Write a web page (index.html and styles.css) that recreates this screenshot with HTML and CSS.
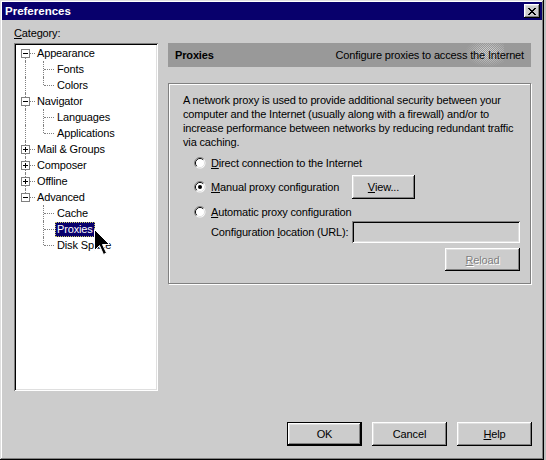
FILE: index.html
```html
<!DOCTYPE html>
<html>
<head>
<meta charset="utf-8">
<title>Preferences</title>
<link rel="stylesheet" href="styles.css">
</head>
<body>
<div class="window">
  <div class="titlebar">
    <span class="title">Preferences</span>
    <span class="close-btn"><svg width="8" height="7" viewBox="0 0 8 7"><path d="M0 0h2v1h1v1h2V1h1V0h2v1H7v1H6v1H5v1h1v1h1v1h1v1H6V6H5V5H3v1H2v1H0V6h1V5h1V4h1V3H2V2H1V1H0z" fill="#000"/></svg></span>
  </div>
  <div class="body">
    <div class="main">
      <div class="cat-label"><u>C</u>ategory:</div>
      <div class="tree">
        <div class="row"><span class="g g0 v-down h"><span class="exp minus"></span></span><span class="lbl">Appearance</span></div>
        <div class="row"><span class="g g0 v"></span><span class="g g1 v h"></span><span class="lbl">Fonts</span></div>
        <div class="row"><span class="g g0 v"></span><span class="g g1 v-up h"></span><span class="lbl">Colors</span></div>
        <div class="row"><span class="g g0 v h"><span class="exp minus"></span></span><span class="lbl">Navigator</span></div>
        <div class="row"><span class="g g0 v"></span><span class="g g1 v h"></span><span class="lbl">Languages</span></div>
        <div class="row"><span class="g g0 v"></span><span class="g g1 v-up h"></span><span class="lbl">Applications</span></div>
        <div class="row"><span class="g g0 v h"><span class="exp plus"></span></span><span class="lbl">Mail &amp; Groups</span></div>
        <div class="row"><span class="g g0 v h"><span class="exp plus"></span></span><span class="lbl">Composer</span></div>
        <div class="row"><span class="g g0 v h"><span class="exp plus"></span></span><span class="lbl">Offline</span></div>
        <div class="row"><span class="g g0 v-up h"><span class="exp minus"></span></span><span class="lbl">Advanced</span></div>
        <div class="row"><span class="g g0"></span><span class="g g1 v h"></span><span class="lbl">Cache</span></div>
        <div class="row"><span class="g g0"></span><span class="g g1 v h"></span><span class="lbl selected">Proxies</span></div>
        <div class="row"><span class="g g0"></span><span class="g g1 v-up h"></span><span class="lbl">Disk Space</span></div>
      </div>
      <div class="panel">
        <div class="panel-head">
          <span class="head-title">Proxies</span>
          <span class="dither"></span>
          <span class="head-desc">Configure proxies to access the Internet</span>
        </div>
        <div class="group">
          <p class="desc">A network proxy is used to provide additional security between your<br>computer and the Internet (usually along with a firewall) and/or to<br>increase performance between networks by reducing redundant traffic<br>via caching.</p>
          <div class="opts">
            <div class="opt r-direct">
              <span class="radio"><svg width="12" height="12" viewBox="0 0 12 12"><circle cx="6" cy="6" r="5.5" fill="#fff"/><path d="M2.1 9.9A5.5 5.5 0 0 1 9.9 2.1" fill="none" stroke="#808080"/><path d="M2.8 9.2A4.5 4.5 0 0 1 9.2 2.8" fill="none" stroke="#000"/><path d="M9.2 2.8A4.5 4.5 0 0 1 2.8 9.2" fill="none" stroke="#dfdfdf"/><circle cx="6" cy="6" r="3.6" fill="#fff"/></svg></span>
              <span class="olbl"><u>D</u>irect connection to the Internet</span>
            </div>
            <div class="opt r-manual">
              <span class="radio"><svg width="12" height="12" viewBox="0 0 12 12"><circle cx="6" cy="6" r="5.5" fill="#fff"/><path d="M2.1 9.9A5.5 5.5 0 0 1 9.9 2.1" fill="none" stroke="#808080"/><path d="M2.8 9.2A4.5 4.5 0 0 1 9.2 2.8" fill="none" stroke="#000"/><path d="M9.2 2.8A4.5 4.5 0 0 1 2.8 9.2" fill="none" stroke="#dfdfdf"/><circle cx="6" cy="6" r="3.6" fill="#fff"/><circle cx="6" cy="6" r="2" fill="#000"/></svg></span>
              <span class="olbl"><u>M</u>anual proxy configuration</span>
              <span class="btn view-btn"><u>V</u>iew...</span>
            </div>
            <div class="opt r-auto">
              <span class="radio"><svg width="12" height="12" viewBox="0 0 12 12"><circle cx="6" cy="6" r="5.5" fill="#fff"/><path d="M2.1 9.9A5.5 5.5 0 0 1 9.9 2.1" fill="none" stroke="#808080"/><path d="M2.8 9.2A4.5 4.5 0 0 1 9.2 2.8" fill="none" stroke="#000"/><path d="M9.2 2.8A4.5 4.5 0 0 1 2.8 9.2" fill="none" stroke="#dfdfdf"/><circle cx="6" cy="6" r="3.6" fill="#fff"/></svg></span>
              <span class="olbl"><u>A</u>utomatic proxy configuration</span>
            </div>
            <div class="opt r-url">
              <span></span>
              <span class="olbl">Configuration <u>l</u>ocation (URL):</span>
              <span class="field"></span>
            </div>
            <div class="opt r-reload">
              <span></span>
              <span></span>
              <span class="btn reload-btn disabled"><u>R</u>eload</span>
            </div>
          </div>
        </div>
      </div>
    </div>
    <div class="footer">
      <span class="btn fbtn default">OK</span>
      <span class="btn fbtn">Cancel</span>
      <span class="btn fbtn"><u>H</u>elp</span>
    </div>
  </div>
  <svg class="cursor" width="17" height="27" viewBox="0 0 17 27"><path d="M0.5 0.5V21.5L5.5 16.5L9.5 25.5L12.5 24L8.5 15.5H15.5Z" fill="#000" stroke="#fff" stroke-width="1" stroke-linejoin="miter"/></svg>
</div>
</body>
</html>
```

FILE: styles.css
```css
html, body {
  margin: 0;
  padding: 0;
  background: #c0c0c0;
}
body {
  font-family: "Liberation Sans", Arial, sans-serif;
  font-size: 11px;
  letter-spacing: -0.15px;
  color: #000;
}
.window {
  position: relative;
  width: 544px;
  height: 460px;
  box-sizing: border-box;
  padding: 2px;
  background: #cccccc;
  box-shadow: inset -1px -1px #000, inset 1px 1px #dfdfdf, inset -2px -2px #808080, inset 2px 2px #fff;
  overflow: hidden;
}
.titlebar {
  height: 18px;
  background: #08006c;
  display: flex;
  align-items: center;
  justify-content: space-between;
  padding: 0 2px 0 3px;
}
.title {
  color: #fff;
  font-weight: bold;
  font-size: 11.5px;
  letter-spacing: 0;
  line-height: 18px;
}
.close-btn {
  width: 16px;
  height: 14px;
  box-sizing: border-box;
  background: #cccccc;
  box-shadow: inset -1px -1px #000, inset 1px 1px #fff, inset -2px -2px #808080, inset 2px 2px #dfdfdf;
  display: flex;
  align-items: center;
  justify-content: center;
  padding-right: 1px;
}
.close-btn svg { display: block; }
.body {
  padding: 7px 10px 0 12px;
}
.main {
  display: grid;
  grid-template-columns: 144px 363px;
  grid-template-rows: 13px 348px;
  column-gap: 10px;
  row-gap: 3px;
}
.cat-label {
  grid-column: 1;
  grid-row: 1;
  line-height: 13px;
}
.tree {
  grid-column: 1;
  grid-row: 2;
  background: #fff;
  padding: 2px;
  box-shadow: inset 1px 1px #808080, inset -1px -1px #fff, inset 2px 2px #000, inset -2px -2px #dfdfdf;
}
.row {
  display: flex;
  height: 16px;
  align-items: center;
}
.g {
  position: relative;
  flex: none;
  height: 16px;
}
.g0 { width: 20px; }
.g1 { width: 19px; }
.g::before, .g::after {
  content: "";
  position: absolute;
  display: none;
}
.g0::before { left: 9px; }
.g1::before { left: 7px; }
.v::before { display: block; top: 0; bottom: 0; border-left: 1px dotted #808080; }
.v-down::before { display: block; top: 10px; bottom: 0; border-left: 1px dotted #808080; }
.v-up::before { display: block; top: 0; height: 6px; border-left: 1px dotted #808080; }
.g1.v-up::before { height: 8px; }
.h::after { display: block; top: 8px; border-top: 1px dotted #808080; }
.g0.h::after { left: 14px; width: 5px; }
.g1.h::after { left: 8px; width: 10px; }
.exp {
  position: absolute;
  left: 5px;
  top: 4px;
  width: 9px;
  height: 9px;
  box-sizing: border-box;
  border: 1px solid #808080;
  background: #fff;
  z-index: 1;
}
.exp::before {
  content: "";
  position: absolute;
  left: 1px;
  top: 3px;
  width: 5px;
  height: 1px;
  background: #000;
}
.exp.plus::after {
  content: "";
  position: absolute;
  left: 3px;
  top: 1px;
  width: 1px;
  height: 5px;
  background: #000;
}
.lbl {
  border: 1px dotted transparent;
  padding: 0 1px 0 1px;
  line-height: 13px;
  white-space: nowrap;
}
.g0 + .lbl { padding-left: 0; }
.lbl.selected {
  background: #08006c;
  color: #fff;
  border-color: #c8c860;
}
.panel {
  grid-column: 2;
  grid-row: 2;
  display: flex;
  flex-direction: column;
}
.panel-head {
  position: relative;
  height: 24px;
  background: #999999;
  display: flex;
  align-items: center;
  justify-content: space-between;
  padding: 0 7px 0 7px;
}
.head-title {
  font-weight: bold;
}
.head-desc {
  position: relative;
}
.dither {
  position: absolute;
  left: 290px;
  top: 0;
  width: 46px;
  height: 24px;
  background-image: repeating-conic-gradient(#cccccc 0 25%, transparent 0 50%);
  background-size: 2px 2px;
  -webkit-mask-image: radial-gradient(ellipse 50% 60% at 65% 40%, #000 30%, transparent 100%);
  mask-image: radial-gradient(ellipse 50% 60% at 65% 40%, #000 30%, transparent 100%);
}
.group {
  margin-top: 16px;
  height: 201px;
  box-sizing: border-box;
  border: 1px solid #808080;
  box-shadow: inset 1px 1px #fff, 1px 1px #fff;
  padding: 9px 10px 0 14px;
}
.desc {
  margin: 0;
  line-height: 14px;
  white-space: nowrap;
}
.opts {
  margin-left: 11px;
  margin-top: 6px;
  display: flex;
  flex-direction: column;
}
.opt {
  display: grid;
  grid-template-columns: 17px 141px 168px;
  align-items: center;
}
.r-direct { height: 16px; }
.r-manual { height: 24px; margin-top: 4px; }
.r-auto { height: 16px; margin-top: 5px; }
.r-url { height: 22px; margin-top: 1px; }
.r-reload { height: 23px; margin-top: 5px; }
.radio { display: flex; align-items: center; }
.radio svg { display: block; }
.olbl { white-space: nowrap; }
.btn {
  display: flex;
  align-items: center;
  justify-content: center;
  box-sizing: border-box;
  background: #cccccc;
  box-shadow: inset -1px -1px #000, inset 1px 1px #fff, inset -2px -2px #808080, inset 2px 2px #dfdfdf;
}
.view-btn {
  width: 63px;
  height: 24px;
}
.reload-btn {
  width: 75px;
  height: 23px;
  justify-self: end;
}
.disabled {
  color: #808080;
  text-shadow: 1px 1px 0 #fff;
}
.field {
  height: 22px;
  box-shadow: inset 1px 1px #808080, inset -1px -1px #fff, inset 2px 2px #000, inset -2px -2px #dfdfdf;
  background: #cccccc;
}
.footer {
  margin-top: 31px;
  display: flex;
  justify-content: flex-end;
  gap: 10px;
}
.fbtn {
  width: 75px;
  height: 24px;
}
.fbtn.default {
  box-shadow: inset 0 0 0 1px #000, inset -2px -2px #000, inset 2px 2px #fff, inset -3px -3px #808080, inset 3px 3px #dfdfdf;
}
.cursor {
  position: absolute;
  left: 94px;
  top: 229px;
}
```
